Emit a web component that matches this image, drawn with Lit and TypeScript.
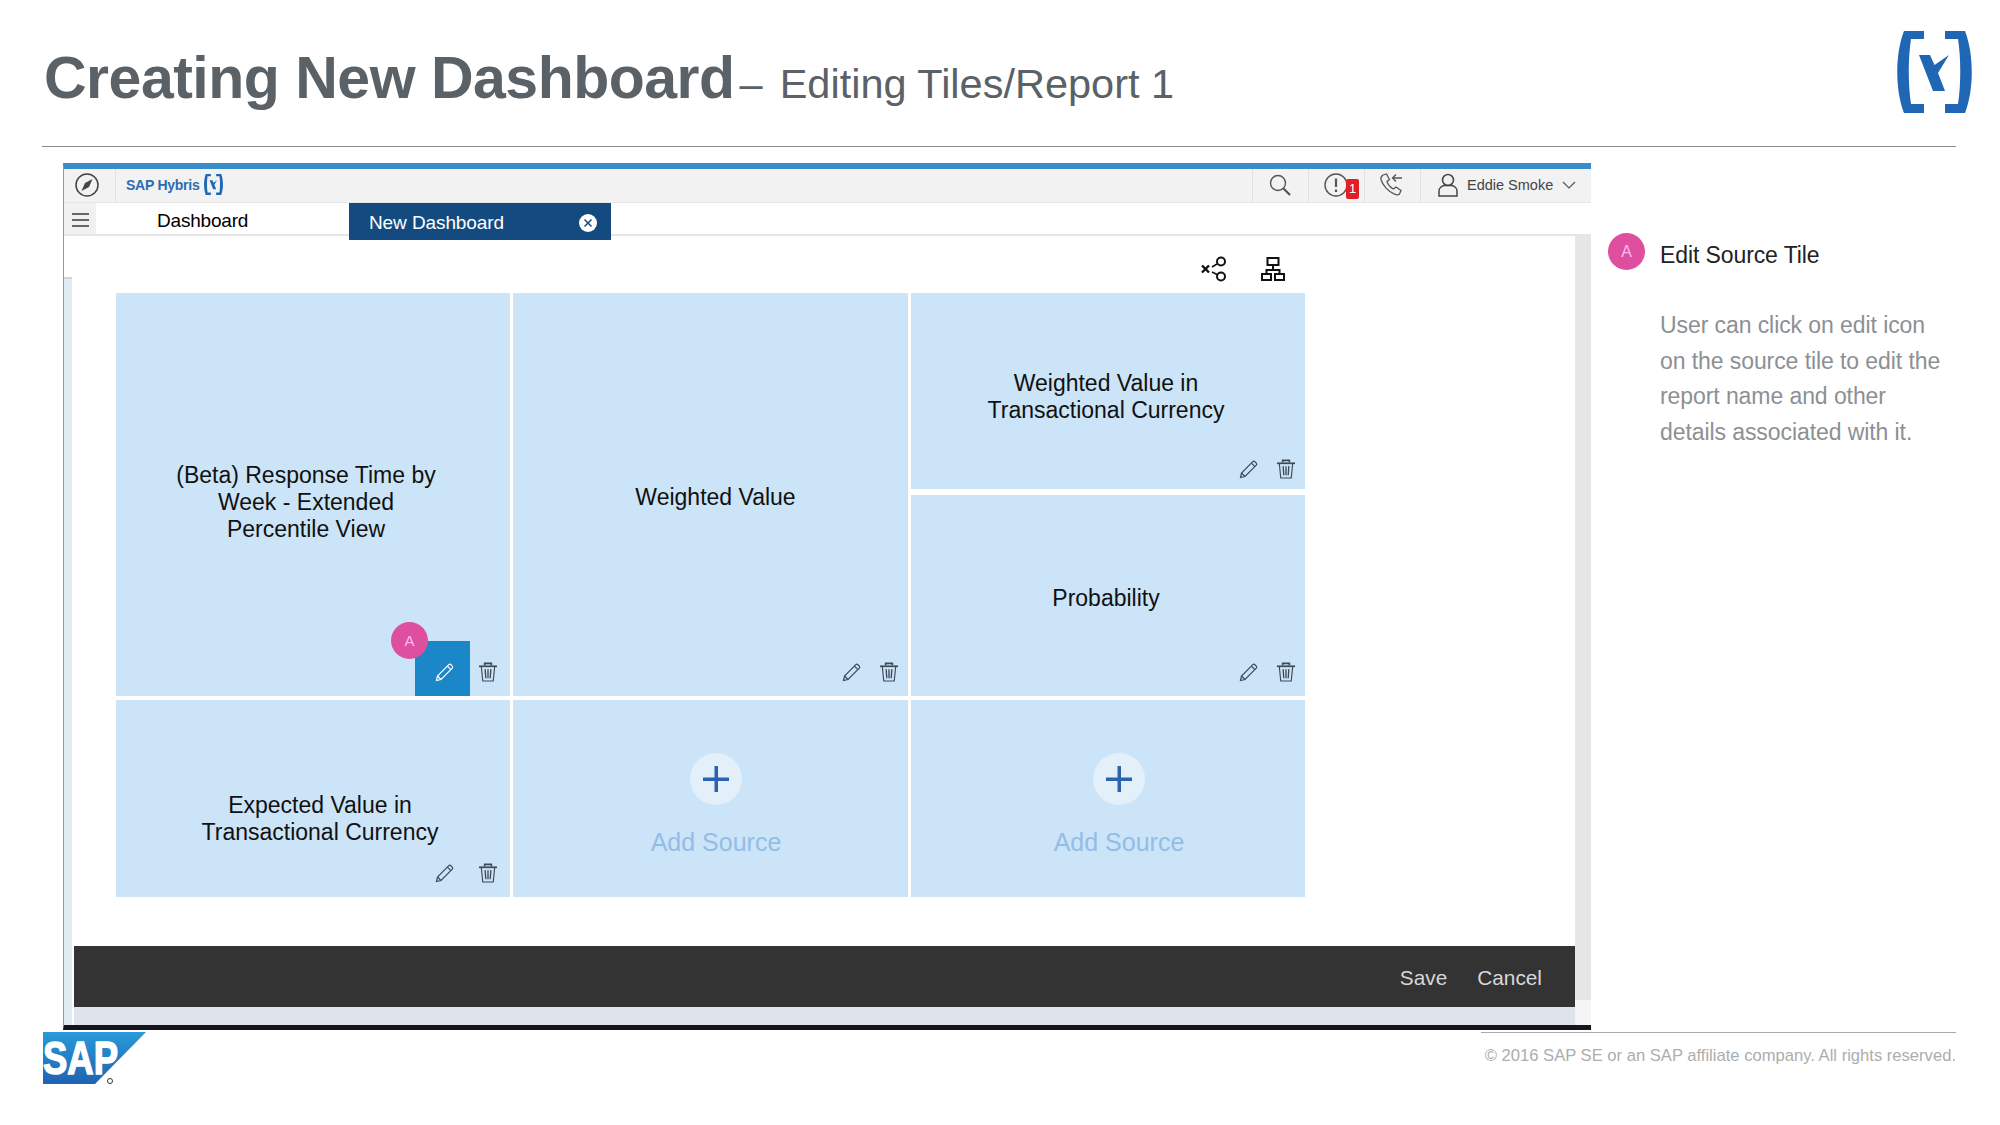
import { LitElement, html, css, svg } from "lit";
import { customElement } from "lit/decorators.js";

const pencil = (c: string) => svg`<svg class="ic" viewBox="0 0 20 20" fill="none" stroke="${c}" stroke-width="1.2"><path d="M1.500 18.500l1-4.500L13.800 2.700a1.500 1.500 0 0 1 2.100 0l1.400 1.400a1.500 1.500 0 0 1 0 2.100L6 17.500z"/><path d="M2.500 14L6 17.500M12.400 4.100l3.500 3.500"/></svg>`;
const trash = svg`<svg class="ic" viewBox="0 0 20 21" fill="none" stroke="#3f4a58" stroke-width="1.200"><path d="M.5 4.500h19" stroke-width="1.800"/><path d="M6.500 3.500V1.500h7v2" stroke-width="1.800"/><path d="M3 5l1.500 15h11L17 5"/><path d="M7 7.500l.7 9.500M10 7.500v9.500M13 7.500l-.7 9.500" stroke-width="1.400"/></svg>`;
const bracketLogo = svg`<svg viewBox="0 0 75 84" fill="#1f66b5" width="100%" height="100%"><path d="M7 1H27V9H14C11 28 11 55 14 74H27V83H7C-2 60-2 24 7 1z"/><path d="M48 1V9H61C64 28 64 55 61 74H48V83H68C77 60 77 24 68 1z"/><path d="M22 25H33L37.500 35L52 25L41 43L48 61H36z"/></svg>`;

@customElement("app-root")
export class AppRoot extends LitElement {
  static styles = css`
    :host { display: block; width: 2000px; height: 1125px; background: #fff; overflow: hidden; font-family: "Liberation Sans", Arial, sans-serif; }
    .ic { display: block; width: 20px; height: 20px; }
    .slide-head { height: 146px; margin: 0 44px 0 42px; border-bottom: 1px solid #8a8a8a; display: flex; justify-content: space-between; position: relative; box-sizing: content-box; }
    .title { padding: 43px 0 0 2px; display: flex; align-items: baseline; color: #5a6268; white-space: nowrap; }
    .title b { font-size: 59px; line-height: 70px; letter-spacing: -0.5px; }
    .title span { font-size: 41.500px; margin-left: 5px; }
    .title span.rest { margin-left: 17px; }
    .logo { width: 75px; height: 84px; margin: 30px 0 0 0; transform: translateX(16px); }
    .main { display: flex; margin: 16px 0 0 63px; }
    .screen { width: 1528px; height: 867px; box-sizing: border-box; border-top: 6px solid #3a8cc8; border-left: 1px solid #9a9a9a; border-bottom: 5px solid #15151f; display: flex; flex-direction: column; background: #fff; }
    .bar { height: 34px; flex: none; background: #f2f2f2; border-bottom: 1px solid #e6e6e6; box-sizing: border-box; display: flex; align-items: center; color: #444; }
    .bar .cell { display: flex; align-items: center; justify-content: center; height: 100%; border-right: 1px solid #e2e2e2; box-sizing: border-box; padding-bottom: 2px; }
    .compass { width: 52px; padding-right: 5px; }
    .brand { font-size: 14px; font-weight: 700; color: #2a6db0; margin: 0 0 2px 10px; letter-spacing: -0.25px; display: flex; align-items: center; gap: 4px; }
    .brand i { display: block; width: 19px; height: 23px; }
    .spacer { flex: 1; }
    .bar .r { border-left: 1px solid #e2e2e2; border-right: none; width: 56px; position: relative; }
    .s { padding-right: 2px; }
    .ph { padding-right: 4px; }
    .user { width: 171px !important; justify-content: flex-start !important; padding-left: 16px; gap: 8px; font-size: 14.500px; color: #444; }
    .al { margin-left: -2px; }
    .notif { position: absolute; left: 37px; top: 10px; width: 13px; height: 20px; background: #e02028; border-radius: 2px; color: #fff; font-size: 13px; line-height: 20px; text-align: center; }
    .tabs { height: 33px; flex: none; display: flex; position: relative; border-bottom: 2px solid #e6e6e6; box-sizing: border-box; font-size: 19px; }
    .burger { width: 32px; background: #f1f1f1; display: flex; flex-direction: column; gap: 4px; padding: 10px 0 0 8px; box-sizing: border-box; }
    .burger u { display: block; width: 17px; height: 2px; background: #666; }
    .tab1 { width: 253px; padding: 7px 0 0 61px; box-sizing: border-box; color: #000; letter-spacing: -0.2px; }
    .tab2 { width: 262px; height: 37px; background: #134b80; color: #fff; display: flex; align-items: center; justify-content: space-between; padding: 2px 14px 0 20px; box-sizing: border-box; z-index: 1; letter-spacing: -0.1px; }
    .close { width: 18px; height: 18px; border-radius: 50%; background: #fff; display: flex; }
    .body { flex: 1; display: flex; min-height: 0; }
    .strip { width: 10px; flex: none; display: flex; flex-direction: column; padding-right: 2px; box-sizing: border-box; }
    .strip div { height: 41px; background: #fff; }
    .strip p { flex: 1; margin: 0; background: #dfedf3; border-top: 2px solid #cfd6da; }
    .content { width: 1501px; flex: none; display: flex; flex-direction: column; }
    .tools { height: 57px; flex: none; width: 1231px; display: flex; justify-content: flex-end; gap: 33px; padding: 20px 19px 0 0; box-sizing: border-box; }
    .tools svg { display: block; width: 26px; height: 26px; }
    .grid { display: grid; grid-template-columns: 394px 395px 394px; grid-template-rows: 403px 197px; column-gap: 3px; row-gap: 4px; margin-left: 42px; }
    .tile { background: #cbe4f7; position: relative; display: flex; flex-direction: column; align-items: center; justify-content: center; text-align: center; font-size: 23px; line-height: 27px; color: #111; box-sizing: border-box; }
    .stack { display: flex; flex-direction: column; gap: 6px; }
    .stack .tile:first-child { height: 196px; }
    .stack .tile:last-child { flex: 1; }
    .stack .tile:first-child .acts { bottom: 10px; }
    .t1 { padding: 16px 14px 0 0; }
    .t2 { padding: 6px 0 0 10px; }
    .t3 { padding: 12px 4px 0 0; }
    .t4 { padding: 6px 4px 0 0; }
    .t5 { padding: 40px 0 0 14px; }
    .acts { position: absolute; right: 9px; bottom: 14px; display: flex; gap: 17px; align-items: flex-end; }
    .acts.wide { right: 12px; bottom: 0; gap: 8px; align-items: flex-end; }
    .acts.wide > svg { margin-bottom: 14px; }
    .btn { width: 55px; height: 55px; display: flex; align-items: flex-end; justify-content: center; padding: 0 0 14px 4px; box-sizing: border-box; }
    .btn.on { background: #1b87c9; }
    .mark { position: absolute; width: 37px; height: 37px; border-radius: 50%; background: #de4f9f; color: #fbe; font-size: 16px; display: flex; align-items: center; justify-content: center; }
    .tile .mark { right: 82px; bottom: 37px; font-size: 15px; line-height: 1; z-index: 2; }
    .add { color: #93bde6; font-size: 25px; letter-spacing: 0; gap: 24px; padding: 11px 0 0 11px; }
    .add.b { padding-left: 22px; }
    .plus { width: 52px; height: 52px; border-radius: 50%; background: #e3eff9; display: flex; align-items: center; justify-content: center; }
    .footer-wrap { flex: 1; display: flex; flex-direction: column; justify-content: flex-end; }
    .dark { height: 61px; background: #333; display: flex; justify-content: flex-end; align-items: center; gap: 30px; padding: 2px 33px 0 0; box-sizing: border-box; color: #d8d8d8; font-size: 20.800px; }
    .under { height: 18px; background: #dfe4ec; }
    .scroll { width: 16px; flex: none; display: flex; flex-direction: column; }
    .scroll div { flex: 1; background: #e6e6e6; }
    .scroll p { height: 25px; margin: 0; background: #f5f5f5; }
    .side { flex: 1; position: relative; padding: 77px 0 0 69px; }
    .side .mark { left: 17px; top: 70px; }
    .side h3 { margin: 0; font-weight: 400; font-size: 23px; line-height: 30px; color: #222; letter-spacing: -0.1px; padding-bottom: 38px; }
    .side .p { font-size: 23px; line-height: 35.600px; color: #8c9094; letter-spacing: -0.08px; white-space: nowrap; }
    .foot { display: flex; justify-content: space-between; margin: 2px 44px 0 43px; }
    .sap { width: 110px; height: 56px; display: block; }
    .copy { width: 475px; border-top: 1px solid #aaa; text-align: right; font-size: 16.600px; color: #adadad; padding-top: 13px; white-space: nowrap; height: 30px; }
  `;

  private actions() {
    return html`<div class="acts">${pencil("#3f4a58")}${trash}</div>`;
  }

  render() {
    return html`
      <div class="slide-head">
        <div class="title"><b>Creating New Dashboard</b><span>–</span><span class="rest">Editing Tiles/Report 1</span></div>
        <div class="logo">${bracketLogo}</div>
      </div>
      <div class="main">
        <div class="screen">
          <div class="bar">
            <div class="cell compass">
              <svg width="26" height="26" viewBox="0 0 26 26" fill="none" stroke="#444" stroke-width="1.500"><circle cx="13" cy="13" r="11"/><path d="M18.500 7l-7.500 4-3.500 8 7.500-4z" fill="#444" stroke="none"/></svg>
            </div>
            <div class="brand">SAP Hybris <i>${bracketLogo}</i></div>
            <div class="spacer"></div>
            <div class="cell r s"><svg width="24" height="24" viewBox="0 0 24 24" fill="none" stroke="#555" stroke-width="1.400"><circle cx="10" cy="10" r="7.500"/><path d="M15.500 15.500L22 22" stroke-width="2.200"/></svg></div>
            <div class="cell r">
              <svg class="al" width="26" height="26" viewBox="0 0 26 26" fill="none" stroke="#555" stroke-width="1.400"><circle cx="13" cy="13" r="11"/><path d="M13 6.500v8.500M13 17.500v2.500" stroke-width="2.200"/></svg>
              <span class="notif">1</span>
            </div>
            <div class="cell r ph"><svg width="26" height="26" viewBox="0 0 26 26" fill="none" stroke="#555" stroke-width="1.300"><path d="M5 3l3.500-1 3 5.500-2.500 2c1 3 3.500 6 6.500 7.500l2.500-2 5 3.500-1.500 3.500c-1 1-3 1-5 .2C10 19.500 4.500 13 3 7.500 2.700 6 3.500 4 5 3z"/><path d="M24 6H14.500M18 2.500L14.500 6l3.500 3.500"/></svg></div>
            <div class="cell r user">
              <svg width="22" height="24" viewBox="0 0 22 24" fill="none" stroke="#444" stroke-width="1.500"><circle cx="11" cy="7" r="5.500"/><path d="M2 23v-5c0-3 3-5 5-5.500h8c2 .5 5 2.500 5 5.500v5z"/></svg>
              <span>Eddie Smoke</span>
              <svg width="14" height="8" viewBox="0 0 14 8" fill="none" stroke="#555" stroke-width="1.200" style="margin-left:1px"><path d="M1 1l6 6 6-6"/></svg>
            </div>
          </div>
          <div class="tabs">
            <div class="burger"><u></u><u></u><u></u></div>
            <div class="tab1">Dashboard</div>
            <div class="tab2">
              <span>New Dashboard</span>
              <span class="close"><svg viewBox="0 0 18 18" fill="none" stroke="#134b80" stroke-width="1.500"><path d="M5.500 5.500l7 7M12.500 5.500l-7 7"/></svg></span>
            </div>
          </div>
          <div class="body">
            <div class="strip"><div></div><p></p></div>
            <div class="content">
              <div class="tools">
                <svg viewBox="0 0 26 26" fill="none" stroke="#111" stroke-width="2"><path d="M1 9.500l7 7M8 9.500l-7 7" stroke-width="2.400"/><circle cx="20" cy="5.500" r="4"/><circle cx="20" cy="20.500" r="4"/><path d="M11 11l5-3M11 16l5 2.500" stroke-width="1.500"/></svg>
                <svg viewBox="0 0 26 26" fill="none" stroke="#111" stroke-width="2"><rect x="7.500" y="2" width="11" height="7"/><rect x="2" y="18" width="9" height="6"/><rect x="15" y="18" width="9" height="6"/><path d="M13 9v5M6.500 18v-4h13v4"/></svg>
              </div>
              <div class="grid">
                <div class="tile t1">
                  (Beta) Response Time by<br />Week - Extended<br />Percentile View
                  <span class="mark">A</span>
                  <div class="acts wide">
                    <span class="btn on">${pencil("#fff")}</span>${trash}
                  </div>
                </div>
                <div class="tile t2">Weighted Value ${this.actions()}</div>
                <div class="stack">
                  <div class="tile t3">Weighted Value in<br />Transactional Currency ${this.actions()}</div>
                  <div class="tile t4">Probability ${this.actions()}</div>
                </div>
                <div class="tile t5">
                  Expected Value in<br />Transactional Currency
                  <div class="acts wide"><span class="btn">${pencil("#3f4a58")}</span>${trash}</div>
                </div>
                <div class="tile add">
                  <span class="plus"><svg width="28" height="28" viewBox="0 0 28 28" fill="#2a62ae"><path d="M12.500 1h3.500v26h-3.500z"/><path d="M1 12.500h26v3.500H1z"/></svg></span>
                  <span>Add Source</span>
                </div>
                <div class="tile add b">
                  <span class="plus"><svg width="28" height="28" viewBox="0 0 28 28" fill="#2a62ae"><path d="M12.500 1h3.500v26h-3.500z"/><path d="M1 12.500h26v3.500H1z"/></svg></span>
                  <span>Add Source</span>
                </div>
              </div>
              <div class="footer-wrap">
                <div class="dark"><span>Save</span><span>Cancel</span></div>
                <div class="under"></div>
              </div>
            </div>
            <div class="scroll"><div></div><p></p></div>
          </div>
        </div>
        <div class="side">
          <span class="mark">A</span>
          <h3>Edit Source Tile</h3>
          <div class="p">User can click on edit icon<br />on the source tile to edit the<br />report name and other<br />details associated with it.</div>
        </div>
      </div>
      <div class="foot">
        <svg class="sap" viewBox="0 0 110 56">
          <defs><linearGradient id="g" x1="0" y1="0" x2="0" y2="1"><stop offset="0" stop-color="#2a9ad8"/><stop offset="1" stop-color="#1f63b3"/></linearGradient></defs>
          <path d="M0 0h103L52 52H0z" fill="url(#g)"/>
          <text x="0" y="42" font-family="Liberation Sans" font-weight="700" font-size="46" fill="#fff" stroke="#fff" stroke-width="1.500" textLength="75" lengthAdjust="spacingAndGlyphs">SAP</text>
          <circle cx="67" cy="49" r="2.500" fill="none" stroke="#333" stroke-width="1"/>
        </svg>
        <div class="copy">© 2016 SAP SE or an SAP affiliate company. All rights reserved.</div>
      </div>
    `;
  }
}
